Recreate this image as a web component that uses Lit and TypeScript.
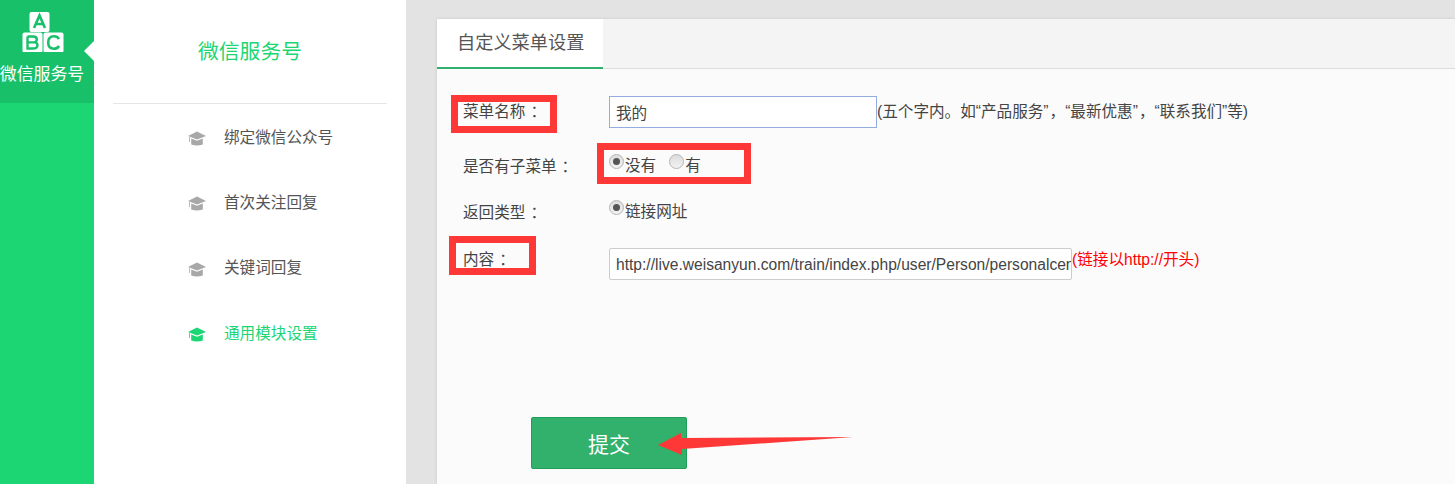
import { LitElement, html, css } from "lit";
import { customElement } from "lit/decorators.js";

const cap = html`<svg class="cap" viewBox="0 0 18 15" width="18" height="15"><path d="M9 0.5 L18 5 L9 8.5 L0 5 Z"/><path d="M3.2 7.6 L9 9.8 L14.8 7.6 V13.6 Q9 15.4 3.2 13.6 Z"/><path d="M1.2 6 H2 V11 H1.2 Z"/></svg>`;
const colon = html`<span class="colon">：</span>`;

@customElement("app-root")
export class AppRoot extends LitElement {
  static styles = css`
    :host { display: block; width: 1455px; height: 484px; overflow: hidden; position: relative; background: #e3e3e3;
      font-family: "Liberation Sans", "Noto Sans CJK SC", sans-serif; color: #444; }
    .page { display: flex; height: 484px; }
    .rail { width: 94px; background: #1bd673; flex: none; }
    .rail-active { height: 103px; background: #19c06a; position: relative; display: flex; flex-direction: column; align-items: center; padding-top: 12px; box-sizing: border-box; color: #fff; font-size: 16.9px; line-height: 24px; white-space: nowrap; }
    .logo { display: block; margin-bottom: 11px; margin-left: -9px; }
    .rail-active span { margin-left: -10px; }
    .notch { position: absolute; right: 0; top: 41px; width: 0; height: 0; border: 10px solid transparent; border-right-color: #fff; border-left-width: 0; }
    .side { width: 312px; background: #fff; flex: none; padding: 0 19px; box-sizing: border-box; }
    .side h2 { margin: 0; height: 104px; box-sizing: border-box; padding-top: 37px; border-bottom: 1px solid #e6e6e6; text-align: center; font-weight: 400; font-size: 20.8px; line-height: 30px; color: #1bd673; }
    .list { margin-top: -1px; }
    .item { display: flex; align-items: center; height: 65.3px; padding-left: 75px; font-size: 15.6px; color: #555; gap: 18px; }
    .cap { fill: #a8a8a8; flex: none; margin-top: 6px; }
    .item.on { color: #1bd673; }
    .item.on .cap { fill: #1bd673; }
    .gap { width: 31px; flex: none; }
    .card { flex: 1; margin-top: 19px; background: #fbfbfb; box-shadow: 0 0 3px rgba(0,0,0,.12); }
    .tabs { height: 50px; background: #f4f4f4; border-bottom: 1px solid #dcdcdc; box-sizing: border-box; display: flex; }
    .tab { width: 166px; height: 50px; box-sizing: border-box; background: #fff; border-bottom: 2px solid #2fb06c; font-size: 18.2px; line-height: 48px; padding-left: 20px; color: #555; }
    .form { padding: 27px 0 0 26px; font-size: 15.6px; color: #444; }
    .row { display: flex; }
    .label { width: 146px; flex: none; white-space: nowrap; }
    .colon { margin-left: 5px; }
    .r1 { height: 32px; }
    .r1 .label { line-height: 31px; }
    input.txt { box-sizing: border-box; height: 32px; padding: 0 6px 1px; font: 15.6px "Liberation Sans", "Noto Sans CJK SC", sans-serif; color: #444; background: #fff; border: 1px solid #93ade0; outline: none; margin: 0; }
    .hint { font-size: 15.6px; line-height: 32px; white-space: nowrap; color: #444; }
    .q { margin-right: 1px; }
    .r2 { margin-top: 26px; height: 24px; line-height: 24px; }
    .r3 { margin-top: 22px; height: 24px; line-height: 24px; }
    .r2 .label, .r3 .label { padding-top: 1px; }
    .radio { width: 15px; height: 15px; border-radius: 50%; box-sizing: border-box; background: linear-gradient(#dcdcdc, #f2f2f2); border: 1px solid #b5b5b5; position: relative; display: inline-block; flex: none; }
    .radio.on::after { content: ""; position: absolute; left: 3px; top: 3px; width: 7px; height: 7px; border-radius: 50%; background: #555; }
    .opts { display: flex; align-items: flex-start; }
    .opts .t { margin-left: 1px; line-height: 24px; }
    .sp { width: 13px; }
    .r4 { margin-top: 24px; height: 32px; }
    .r4 .label { line-height: 24px; }
    .r4 input.txt { width: 463px; border-color: #ccc; border-radius: 2px; padding: 1px 0 0 6px; }
    .red { color: #f00; font-size: 15.6px; line-height: 24px; white-space: nowrap; }
    .btn { margin: 137px 0 0 68px; width: 156px; height: 52px; box-sizing: border-box; background: #32b16c; border: 1px solid #1f9e58; border-radius: 2px; color: #fff; font: 21px "Liberation Sans", "Noto Sans CJK SC", sans-serif; display: block; padding: 0; }
    .box { position: absolute; border: 7px solid #fe3737; box-sizing: border-box; }
    .arrow { position: absolute; left: 655px; top: 430px; }
  `;

  render() {
    const items = ["绑定微信公众号", "首次关注回复", "关键词回复", "通用模块设置"];
    return html`
      <div class="page">
        <nav class="rail">
          <div class="rail-active">
            <svg class="logo" width="42" height="40" viewBox="0 0 42 40">
              <rect x="7.5" y="0" width="20" height="20" rx="2" fill="#fff"/>
              <rect x="0.5" y="20.5" width="20" height="20" rx="2" fill="#fff"/>
              <rect x="21.5" y="20.5" width="20" height="20" rx="2" fill="#fff"/>
              <path d="M12 16 L17.5 3.5 L23 16 M14 12 H21" fill="none" stroke="#19c06a" stroke-width="2.6"/>
              <path d="M5.5 24.5 V36.5 H11 Q15.5 36.5 15.5 33 Q15.5 30.4 12 30.4 H5.5 M12 30.4 Q14.8 30 14.8 27.5 Q14.8 24.5 11 24.5 H5.5" fill="none" stroke="#19c06a" stroke-width="2.4"/>
              <path d="M37 27 Q35.5 24.3 32 24.3 Q26.2 24.3 26.2 30.5 Q26.2 36.7 32 36.7 Q35.5 36.7 37 34" fill="none" stroke="#19c06a" stroke-width="2.6"/>
            </svg>
            <span>微信服务号</span>
            <i class="notch"></i>
          </div>
        </nav>
        <aside class="side">
          <h2>微信服务号</h2>
          <div class="list">
            ${items.map((t, i) => html`<div class="item ${i === 3 ? "on" : ""}">${cap}<span>${t}</span></div>`)}
          </div>
        </aside>
        <div class="gap"></div>
        <main class="card">
          <div class="tabs"><div class="tab">自定义菜单设置</div></div>
          <div class="form">
            <div class="row r1">
              <div class="label">菜单名称${colon}</div>
              <input class="txt" style="width:268px" .value=${"我的"} />
              <div class="hint">(五个字内。如“产品服务<span class="q">”</span>，“最新优惠<span class="q">”</span>，“联系我们”等)</div>
            </div>
            <div class="row r2">
              <div class="label">是否有子菜单${colon}</div>
              <div class="opts"><i class="radio on"></i><span class="t">没有</span><span class="sp"></span><i class="radio"></i><span class="t">有</span></div>
            </div>
            <div class="row r3">
              <div class="label">返回类型${colon}</div>
              <div class="opts"><i class="radio on"></i><span class="t">链接网址</span></div>
            </div>
            <div class="row r4">
              <div class="label">内容${colon}</div>
              <input class="txt" .value=${"http://live.weisanyun.com/train/index.php/user/Person/personalcenter"} />
              <div class="red">(链接以http://开头)</div>
            </div>
            <button class="btn">提交</button>
          </div>
        </main>
      </div>
      <div class="box" style="left:451px;top:95px;width:106px;height:38px"></div>
      <div class="box" style="left:597px;top:143px;width:154px;height:41px"></div>
      <div class="box" style="left:449px;top:236px;width:87px;height:39px"></div>
      <svg class="arrow" width="200" height="30" viewBox="0 0 200 30">
        <path d="M3 15 L26 3 L26 8 L198 7 L27 19 L27 25 Z" fill="#fe3737"/>
      </svg>
    `;
  }
}
